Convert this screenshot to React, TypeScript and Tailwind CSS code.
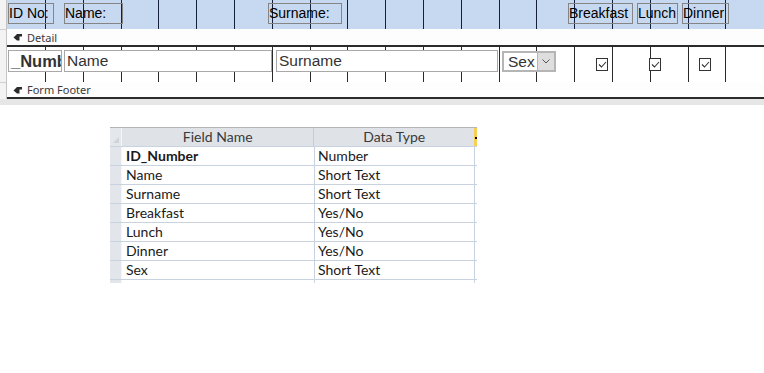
import React from "react";

const cols = Array.from({ length: 19 });

function HeaderGrid() {
  return (
    <div className="absolute inset-0 flex pl-[38px]">
      {cols.map((_, i) => (
        <div key={i} className="w-[37.8px] shrink-0 border-l border-[#14203d]" />
      ))}
    </div>
  );
}

function DetailGrid() {
  return (
    <div className="absolute inset-0 flex pl-[38px]">
      {cols.map((_, i) => (
        <div key={i} className="w-[37.8px] shrink-0 border-l border-[#2a2a2a]" />
      ))}
    </div>
  );
}

function SectionIcon() {
  return (
    <svg width="9" height="8" viewBox="0 0 9 8" className="shrink-0">
      <path d="M0.5 4.5 L4 1 L9 1 L9 3.5 L6.5 3.5 L6.5 7.5 L4 7.5 Z" fill="#2b2b2b" />
    </svg>
  );
}

function SectionBar({ label, h }: { label: string; h: string }) {
  return (
    <div className={`${h} flex items-center gap-[5px] border-b-2 border-[#2b2b2b] bg-[#fdfdfd] pl-[6px] font-['Noto_Sans',sans-serif] text-[11px] leading-none text-[#3a3a3a]`}>
      <SectionIcon />
      <span>{label}</span>
    </div>
  );
}

function CheckBox({ ml }: { ml: string }) {
  return (
    <div className={`${ml} mt-[8px] flex h-[13px] w-[12px] shrink-0 items-center justify-center border border-[#333] bg-white`}>
      <svg width="9" height="7" viewBox="0 0 9 7">
        <path d="M1 3.5 L3.5 6 L8 1" fill="none" stroke="#333" strokeWidth="1.1" />
      </svg>
    </div>
  );
}

const rows: [string, string][] = [
  ["ID_Number", "Number"],
  ["Name", "Short Text"],
  ["Surname", "Short Text"],
  ["Breakfast", "Yes/No"],
  ["Lunch", "Yes/No"],
  ["Dinner", "Yes/No"],
  ["Sex", "Short Text"],
];

export default function App() {
  return (
    <div className="relative h-[373px] w-[764px] overflow-hidden bg-white">
      {/* Form designer */}
      <div className="flex font-['Liberation_Sans',Arial,sans-serif]">
        <div className="w-[7px] shrink-0 border-r border-[#c4c4c4] bg-[#f3f3f3]">
          <div className="h-[30px] border-b border-[#cfcfcf]" />
          <div className="h-[17px]" />
          <div className="h-[36px] border-b border-[#cfcfcf]" />
        </div>
        <div className="flex-1">
          {/* Form header */}
          <div className="relative h-[29px] bg-[#c6d9f0]">
            <HeaderGrid />
            <div className="relative flex items-start pl-[1px] pt-[3px] text-[14px] leading-[19px] text-black">
              <div className="h-[21px] w-[46px] shrink-0 whitespace-nowrap border border-[#858585]">ID No:</div>
              <div className="ml-[10px] h-[21px] w-[59px] shrink-0 whitespace-nowrap border border-[#858585]">Name:</div>
              <div className="ml-[145px] h-[21px] w-[74px] shrink-0 whitespace-nowrap border border-[#858585]">Surname:</div>
              <div className="ml-[226px] h-[21px] w-[65px] shrink-0 whitespace-nowrap border border-[#858585]">Breakfast</div>
              <div className="ml-[4px] h-[21px] w-[41px] shrink-0 whitespace-nowrap border border-[#858585]">Lunch</div>
              <div className="ml-[4px] h-[21px] w-[47px] shrink-0 whitespace-nowrap border border-[#858585]">Dinner</div>
            </div>
          </div>
          <SectionBar label="Detail" h="h-[18px]" />
          {/* Detail row */}
          <div className="relative h-[35px] bg-white">
            <DetailGrid />
            <div className="relative flex items-start pl-[1px] pt-[3px] text-[15.5px] leading-[20px] text-[#333]">
              <div className="h-[22px] w-[54px] shrink-0 overflow-hidden whitespace-nowrap border border-[#a8a8a8] bg-white pl-[2px] text-[16.5px] font-bold">_Number</div>
              <div className="ml-[2px] h-[22px] w-[208px] shrink-0 border border-[#a8a8a8] bg-white pl-[2px]">Name</div>
              <div className="ml-[4px] h-[22px] w-[222px] shrink-0 border border-[#a8a8a8] bg-white pl-[2px]">Surname</div>
              <div className="ml-[4px] mt-[1px] flex h-[21px] w-[54px] shrink-0 border-2 border-[#b5b5b5] bg-white">
                <div className="flex-1 pl-[4px] leading-[17px]">Sex</div>
                <div className="flex w-[17px] items-center justify-center border-l border-[#b5b5b5] bg-[#dedede]">
                  <svg width="8" height="5" viewBox="0 0 8 5">
                    <path d="M0.5 0.5 L4 4 L7.5 0.5" fill="none" stroke="#555" strokeWidth="1" />
                  </svg>
                </div>
              </div>
              <CheckBox ml="ml-[40px]" />
              <CheckBox ml="ml-[41px]" />
              <CheckBox ml="ml-[38px]" />
            </div>
          </div>
          <SectionBar label="Form Footer" h="h-[17px]" />
        </div>
      </div>
      <div className="h-[6px] bg-[#e6e6e6]" />

      {/* Table design grid */}
      <div className="ml-[110px] mt-[22px] w-[367px] font-['Lato',sans-serif] text-[14px] text-[#1a1a1a]">
        <div className="flex h-[19px] border-t border-[#b4b4b4] bg-[#dfe3e8]">
          <div className="relative w-[12px] border-r border-[#f4f6f8] bg-[#e4e7eb]">
            <svg width="8" height="8" viewBox="0 0 8 8" className="absolute bottom-[2px] right-[1px]">
              <path d="M7 1 L7 7 L1 7 Z" fill="#cfd4da" />
            </svg>
          </div>
          <div className="flex w-[193px] items-center justify-center border-r border-[#c3ccd7] leading-none text-[#3a3a3a]">Field Name</div>
          <div className="flex w-[160px] items-center justify-center leading-none text-[#3a3a3a]">Data Type</div>
          <div className="relative w-[3px] bg-[#f7cf55]">
            <div className="absolute left-[1px] top-[9px] h-[2px] w-[2px] bg-black" />
          </div>
        </div>
        {rows.map(([name, type], i) => (
          <div key={name} className="flex h-[19px] border-t border-[#c9d3df]">
            <div className="w-[12px] border-r border-[#f4f6f8] bg-[#e2e5ea]" />
            <div className={`flex w-[193px] items-center border-r border-[#c9d3df] pl-[4px] leading-none ${i === 0 ? "font-bold" : ""}`}>{name}</div>
            <div className="flex w-[160px] items-center border-r border-[#c9d3df] pl-[3px] leading-none">{type}</div>
          </div>
        ))}
        <div className="flex h-[4px] border-t border-[#c9d3df]">
          <div className="w-[12px] border-r border-[#f4f6f8] bg-[#e2e5ea]" />
          <div className="w-[193px] border-r border-[#c9d3df]" />
          <div className="w-[160px] border-r border-[#c9d3df]" />
        </div>
      </div>
    </div>
  );
}
